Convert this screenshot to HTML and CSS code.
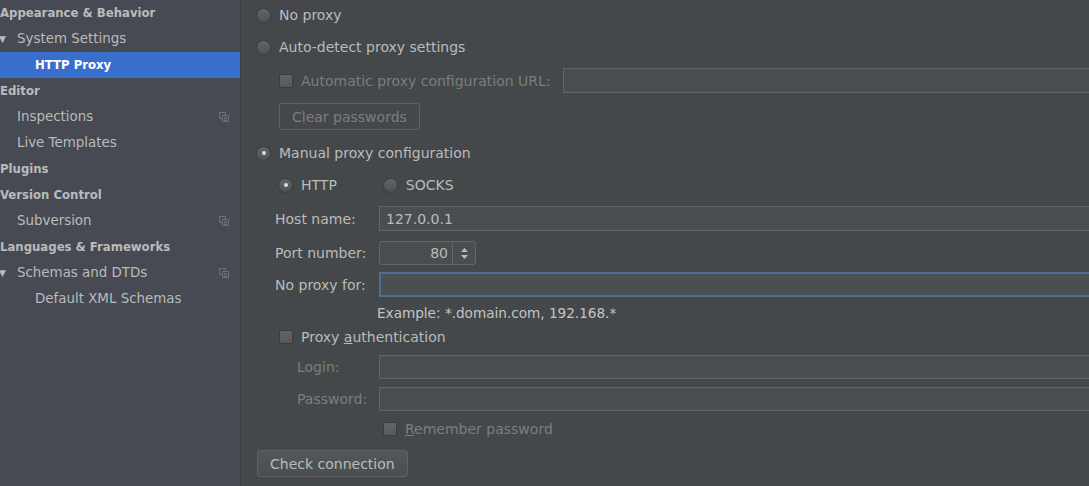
FILE: index.html
```html
<!DOCTYPE html>
<html lang="en">
<head>
  <meta charset="UTF-8">
  <title>HTTP Proxy</title>
  <link rel="stylesheet" href="styles.css">
</head>
<body>
  <div class="settings">
    <div class="sidebar">
      <div class="tree-item top">Appearance &amp; Behavior</div>
      <div class="tree-item lvl1"><span class="arrow">▼</span>System Settings</div>
      <div class="tree-item lvl2 selected">HTTP Proxy</div>
      <div class="tree-item top">Editor</div>
      <div class="tree-item lvl1">Inspections<span class="copy-icon"><svg width="10" height="10" viewBox="0 0 10 10"><rect x="0.5" y="0.5" width="6" height="6" fill="none" stroke="#6b6e72"/><rect x="3.5" y="3.5" width="6" height="6" fill="#474a53" stroke="#6b6e72"/><path d="M5 5.5h3M5 7h3M5 8.5h3" stroke="#6b6e72"/></svg></span></div>
      <div class="tree-item lvl1">Live Templates</div>
      <div class="tree-item top">Plugins</div>
      <div class="tree-item top">Version Control</div>
      <div class="tree-item lvl1">Subversion<span class="copy-icon"><svg width="10" height="10" viewBox="0 0 10 10"><rect x="0.5" y="0.5" width="6" height="6" fill="none" stroke="#6b6e72"/><rect x="3.5" y="3.5" width="6" height="6" fill="#474a53" stroke="#6b6e72"/><path d="M5 5.5h3M5 7h3M5 8.5h3" stroke="#6b6e72"/></svg></span></div>
      <div class="tree-item top">Languages &amp; Frameworks</div>
      <div class="tree-item lvl1"><span class="arrow">▼</span>Schemas and DTDs<span class="copy-icon"><svg width="10" height="10" viewBox="0 0 10 10"><rect x="0.5" y="0.5" width="6" height="6" fill="none" stroke="#6b6e72"/><rect x="3.5" y="3.5" width="6" height="6" fill="#474a53" stroke="#6b6e72"/><path d="M5 5.5h3M5 7h3M5 8.5h3" stroke="#6b6e72"/></svg></span></div>
      <div class="tree-item lvl2">Default XML Schemas</div>
    </div>

    <div class="panel">
      <div class="row r-noproxy">
        <span class="radio"></span><span>No proxy</span>
      </div>
      <div class="row r-auto">
        <span class="radio"></span><span>Auto-detect proxy settings</span>
      </div>
      <div class="row r-pac indent">
        <span class="checkbox"></span><span class="disabled pac-label">Automatic proxy configuration URL:</span>
        <span class="field wide"></span>
      </div>
      <div class="row r-clear indent">
        <span class="button disabled-btn">Clear passwords</span>
      </div>
      <div class="row r-manual">
        <span class="radio checked"></span><span>Manual proxy configuration</span>
      </div>
      <div class="row r-type">
        <span class="radio checked"></span><span class="type-label">HTTP</span>
        <span class="radio"></span><span>SOCKS</span>
      </div>
      <div class="row r-host form-row">
        <span class="form-label">Host name:</span>
        <span class="field wide">127.0.0.1</span>
      </div>
      <div class="row r-port form-row">
        <span class="form-label">Port number:</span>
        <span class="spinner"><span class="spin-value">80</span><span class="spin-arrows"><svg width="9" height="13" viewBox="0 0 9 13"><path d="M4.5 1L8 5H1z M4.5 12L8 8H1z" fill="#bbbbbb"/></svg></span></span>
      </div>
      <div class="row r-noproxyfor form-row">
        <span class="form-label">No proxy for:</span>
        <span class="field wide focused"></span>
      </div>
      <div class="row r-example">
        <span class="example">Example: *.domain.com, 192.168.*</span>
      </div>
      <div class="row r-auth indent">
        <span class="checkbox"></span><span>Proxy <u>a</u>uthentication</span>
      </div>
      <div class="row r-login form-row sub">
        <span class="form-label disabled">Login:</span>
        <span class="field wide"></span>
      </div>
      <div class="row r-pass form-row sub">
        <span class="form-label disabled">Password:</span>
        <span class="field wide"></span>
      </div>
      <div class="row r-remember">
        <span class="checkbox"></span><span class="disabled"><u>R</u>emember password</span>
      </div>
      <div class="row r-check">
        <span class="button">Check connection</span>
      </div>
    </div>
  </div>
</body>
</html>
```

FILE: styles.css
```css
html, body {
  margin: 0;
  height: 100%;
  overflow: hidden;
}
body {
  font-family: "DejaVu Sans", "Liberation Sans", sans-serif;
  font-size: 14px;
  color: #bbbbbb;
  background: #45484a;
}
.settings {
  display: flex;
  height: 486px;
}

/* left tree */
.sidebar {
  width: 240px;
  flex: none;
  background: #474a52;
  border-right: 1px solid #3d3f44;
  font-size: 13.4px;
}
.tree-item {
  height: 26px;
  line-height: 26px;
  position: relative;
  white-space: nowrap;
}
.tree-item.top {
  font-family: "DejaVu Sans Condensed", "DejaVu Sans", sans-serif;
  font-weight: bold;
  font-size: 13px;
  padding-left: 0;
}
.tree-item.lvl1 {
  padding-left: 17px;
}
.tree-item.lvl2 {
  padding-left: 35px;
}
.tree-item.selected {
  background: #386fcc;
  color: #ffffff;
  font-family: "DejaVu Sans Condensed", "DejaVu Sans", sans-serif;
  font-weight: bold;
  font-size: 13px;
}
.arrow {
  position: absolute;
  left: -1px;
  font-size: 9px;
}
.copy-icon {
  position: absolute;
  right: 11px;
  top: 8px;
  line-height: 0;
}

/* right panel */
.panel {
  flex: 1;
  overflow: hidden;
  padding-left: 15px;
}
.row {
  display: flex;
  align-items: center;
  white-space: nowrap;
}
.indent {
  padding-left: 23px;
}
.r-noproxy { margin-top: 2px; height: 26px; }
.r-auto { margin-top: 6px; height: 26px; }
.r-pac { margin-top: 8px; height: 25px; }
.r-clear { margin-top: 10px; height: 27px; }
.r-manual { margin-top: 10px; height: 26px; }
.r-type { margin-top: 6px; height: 26px; padding-left: 22px; }
.r-host { margin-top: 8px; height: 25px; }
.r-port { margin-top: 10px; height: 24px; }
.r-noproxyfor { margin-top: 7px; height: 25px; }
.r-example { margin-top: 6px; height: 20px; padding-left: 121px; }
.r-auth { margin-top: 2px; height: 24px; }
.r-login { margin-top: 6px; height: 24px; }
.r-pass { margin-top: 8px; height: 24px; }
.r-remember { margin-top: 6px; height: 24px; padding-left: 127px; }
.r-check { margin-top: 9px; height: 27px; padding-left: 1px; }

.radio {
  width: 15px;
  height: 15px;
  border-radius: 50%;
  box-sizing: border-box;
  background: linear-gradient(#626567, #505355);
  border: 1px solid #393b3d;
  margin-right: 8px;
  flex: none;
  position: relative;
}
.radio.checked::after {
  content: "";
  position: absolute;
  left: 4.5px;
  top: 4.5px;
  width: 4px;
  height: 4px;
  border-radius: 50%;
  background: #dddddd;
}
.r-type .type-label {
  margin-right: 46px;
}
.checkbox {
  width: 14px;
  height: 14px;
  box-sizing: border-box;
  border-radius: 2px;
  background: linear-gradient(#636668, #56595b);
  border: 1px solid #393b3d;
  margin-right: 8px;
  flex: none;
}
.disabled {
  color: #7b7d7f;
}
.pac-label {
  margin-right: 12px;
}
.field {
  box-sizing: border-box;
  height: 100%;
  border: 1px solid #646567;
  background: #4b4e50;
  display: flex;
  align-items: center;
  padding-left: 6px;
  color: #bbbbbb;
}
.field.wide {
  flex: 1;
  margin-right: -20px;
}
.field.focused {
  border: 2px solid #4c6f95;
  background: #4c4f51;
}
.form-row {
  padding-left: 19px;
}
.form-label {
  width: 104px;
  flex: none;
}
.sub .form-label {
  padding-left: 22px;
  width: 82px;
}
.button {
  box-sizing: border-box;
  height: 100%;
  display: flex;
  align-items: center;
  padding: 0 12px;
  border: 1px solid #5f6264;
  border-radius: 3px;
  background: linear-gradient(#54575a, #4b4e50);
}
.disabled-btn {
  background: none;
  color: #7b7d7f;
}
.spinner {
  box-sizing: border-box;
  height: 100%;
  width: 97px;
  display: flex;
  border: 1px solid #646567;
  border-radius: 3px;
  background: #4b4e50;
}
.spin-value {
  flex: 1;
  text-align: right;
  padding-right: 4px;
  line-height: 22px;
}
.spin-arrows {
  width: 22px;
  border-left: 1px solid #646567;
  display: flex;
  align-items: center;
  justify-content: center;
}
.example {
  color: #c4c4c4;
  font-size: 13.6px;
}
```
